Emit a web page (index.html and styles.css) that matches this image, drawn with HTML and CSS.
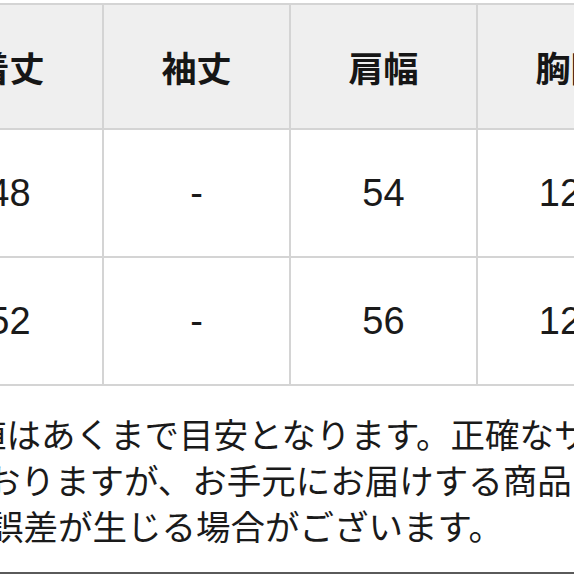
FILE: index.html
```html
<!DOCTYPE html>
<html lang="ja">
<head>
<meta charset="utf-8">
<title>サイズ表</title>
<link rel="stylesheet" href="styles.css">
</head>
<body>
<div class="page">
  <table class="size-table">
    <thead>
      <tr><th>着丈</th><th>袖丈</th><th>肩幅</th><th>胸囲</th></tr>
    </thead>
    <tbody>
      <tr><td>48</td><td>-</td><td>54</td><td>120</td></tr>
      <tr><td>52</td><td>-</td><td>56</td><td>124</td></tr>
    </tbody>
  </table>
  <div class="note">
    <p class="note-line note-line-first">値はあくまで目安となります。正確なサイズを計測して</p>
    <p class="note-line note-line-second">おりますが、お手元にお届けする商品によって多少の</p>
    <p class="note-line note-line-third">誤差が生じる場合がございます。</p>
  </div>
</div>
</body>
</html>
```
FILE: styles.css
```css
html, body {
  margin: 0;
  padding: 0;
  background: #ffffff;
  overflow: hidden;
}
body {
  width: 574px;
  height: 574px;
  font-family: "Noto Sans CJK JP", "Liberation Sans", sans-serif;
  color: #1c1c1c;
}
.page {
  display: flex;
  flex-direction: column;
  width: 574px;
  height: 574px;
  overflow: hidden;
  padding-top: 3px;
  box-sizing: border-box;
}
.size-table {
  flex: none;
  border-collapse: collapse;
  table-layout: fixed;
  width: 750px;
  margin-left: -85px;
}
.size-table th,
.size-table td {
  border: 2px solid #d4d4d4;
  padding: 0;
  text-align: center;
  vertical-align: middle;
}
.size-table th {
  height: 123px;
  background: #efefef;
  font-family: "Noto Sans CJK JP", sans-serif;
  font-size: 35px;
  font-weight: 700;
  color: #161616;
}
.size-table td {
  height: 126px;
  background: #ffffff;
  font-family: "Liberation Sans", "Noto Sans CJK JP", sans-serif;
  font-size: 38px;
  color: #1a1a1a;
}
.note {
  flex: none;
  padding-top: 24px;
  padding-bottom: 24px;
  border-bottom: 2px solid #5a5a5a;
  width: 660px;
  margin-left: -30px;
}
.note-line {
  margin: 0;
  white-space: nowrap;
  font-size: 34.5px;
  line-height: 46px;
  color: #1a1a1a;
}
.note-line-first {
  padding-left: 2px;
}
.note-line-second {
  padding-left: 16px;
}
.note-line-third {
  padding-left: 19px;
}
```
